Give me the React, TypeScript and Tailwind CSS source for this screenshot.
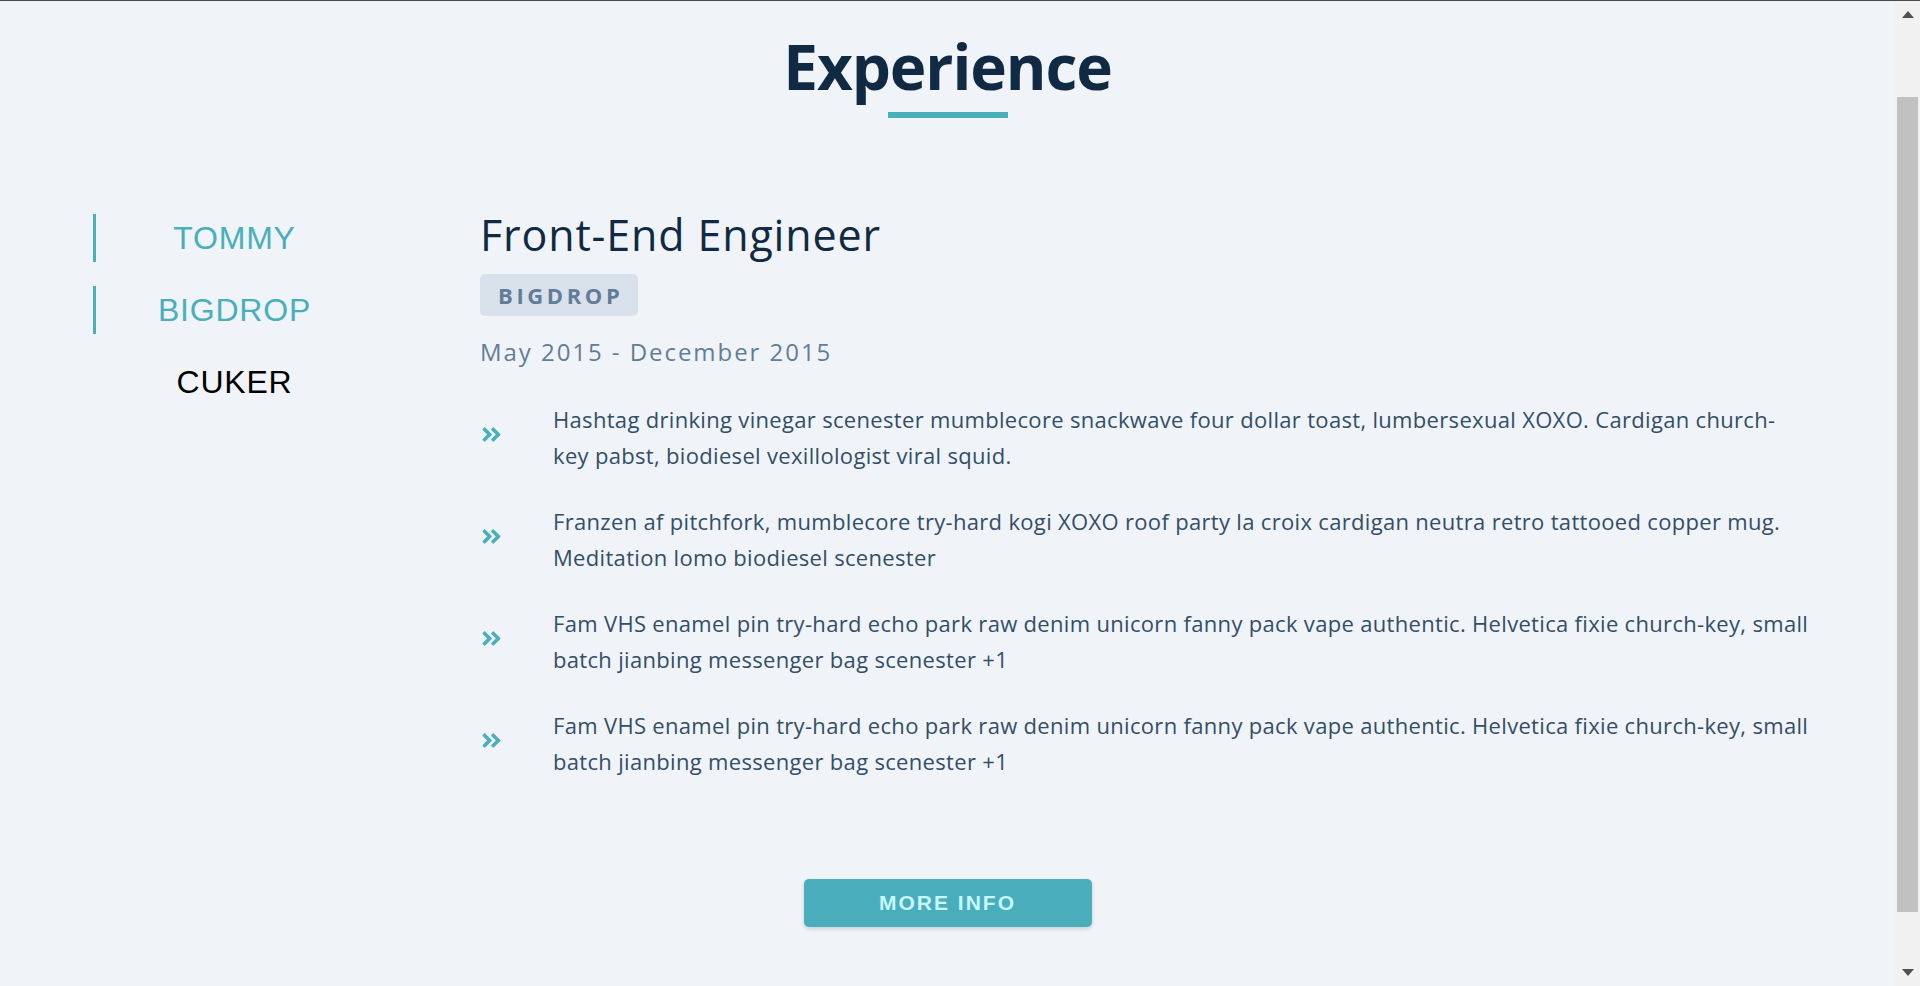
import React from "react";
import { FaAngleDoubleRight } from "react-icons/fa";

const navItems = [
  { label: "TOMMY", active: true },
  { label: "BIGDROP", active: true },
  { label: "CUKER", active: false },
];

const bullets: string[][] = [
  [
    "Hashtag drinking vinegar scenester mumblecore snackwave four dollar toast, lumbersexual XOXO. Cardigan church-",
    "key pabst, biodiesel vexillologist viral squid.",
  ],
  [
    "Franzen af pitchfork, mumblecore try-hard kogi XOXO roof party la croix cardigan neutra retro tattooed copper mug.",
    "Meditation lomo biodiesel scenester",
  ],
  [
    "Fam VHS enamel pin try-hard echo park raw denim unicorn fanny pack vape authentic. Helvetica fixie church-key, small",
    "batch jianbing messenger bag scenester +1",
  ],
  [
    "Fam VHS enamel pin try-hard echo park raw denim unicorn fanny pack vape authentic. Helvetica fixie church-key, small",
    "batch jianbing messenger bag scenester +1",
  ],
];

function Scrollbar() {
  return (
    <div className="w-[25px] h-full bg-[#f1f1f1] flex flex-col items-stretch shrink-0">
      <div className="h-[96px] flex justify-center pt-[10px]">
        <svg width="12" height="7" viewBox="0 0 12 7">
          <polygon points="6,0 12,7 0,7" fill="#505050" />
        </svg>
      </div>
      <div className="h-[815px] mx-[2px] bg-[#c1c1c1]" />
      <div className="flex-1 flex justify-center items-end pb-[10px]">
        <svg width="12" height="7" viewBox="0 0 12 7">
          <polygon points="0,0 12,0 6,7" fill="#505050" />
        </svg>
      </div>
    </div>
  );
}

export default function App() {
  return (
    <div className="w-full h-[986px] overflow-hidden border-t border-[#4a4a4a] bg-[#f0f4f8] flex flex-row">
      <main className="flex-1 flex flex-col font-['Open_Sans',sans-serif]">
        <header className="flex flex-col items-center pt-[34px]">
          <h1 className="text-[62px] leading-none font-bold text-[#102a43] tracking-[-1.1px]">
            Experience
          </h1>
          <div className="mt-[15px] w-[120px] h-[6px] bg-[#4aafbc]" />
        </header>

        <section className="flex flex-row items-start mt-[91px]">
          <nav className="ml-[93px] w-[280px] mt-[5px] flex flex-col gap-[24px] font-['Liberation_Sans',Arial,sans-serif]">
            {navItems.map((item) => (
              <div
                key={item.label}
                className={
                  item.active
                    ? "h-[48px] border-l-[3px] border-[#4aafbc] flex items-center justify-center text-[32px] leading-[48px] tracking-[0.8px] text-[#4aafbc]"
                    : "h-[48px] border-l-[3px] border-transparent flex items-center justify-center text-[32px] leading-[48px] tracking-[0.8px] text-[#000000]"
                }
              >
                {item.label}
              </div>
            ))}
          </nav>

          <div className="ml-[107px] flex-1 flex flex-col items-start">
            <h2 className="text-[43px] leading-[52px] font-normal text-[#102a43] tracking-[0.85px]">
              Front-End Engineer
            </h2>
            <div className="mt-[13px] h-[42px] pl-[18px] pr-[15px] rounded-[5px] bg-[#d9e2ec] text-[22px] leading-[42px] font-bold tracking-[3.6px] text-[#627d98]">
              BIGDROP
            </div>
            <div className="mt-[20px] text-[24px] leading-[32px] tracking-[1.95px] text-[#627d98]">
              May 2015 - December 2015
            </div>
            <ul className="mt-[33px] flex flex-col gap-[30px]">
              {bullets.map((lines, i) => (
                <li key={i} className="flex flex-row items-center">
                  <div className="w-[73px] shrink-0 flex items-center pb-[5px] text-[#4aafbc]">
                    <FaAngleDoubleRight size={23} />
                  </div>
                  <p className="text-[22px] leading-[36px] tracking-[0.32px] text-[#334e68] whitespace-nowrap">
                    {lines[0]}
                    <br />
                    {lines[1]}
                  </p>
                </li>
              ))}
            </ul>
          </div>
        </section>

        <div className="mt-[100px] flex justify-center">
          <button className="w-[288px] h-[48px] rounded-[5px] bg-[#49adbb] shadow-[0_2px_4px_rgba(0,0,0,0.15)] font-['Liberation_Sans',Arial,sans-serif] font-bold text-[21px] tracking-[2px] text-[#c6f7fb]">
            MORE INFO
          </button>
        </div>
      </main>
      <Scrollbar />
    </div>
  );
}
